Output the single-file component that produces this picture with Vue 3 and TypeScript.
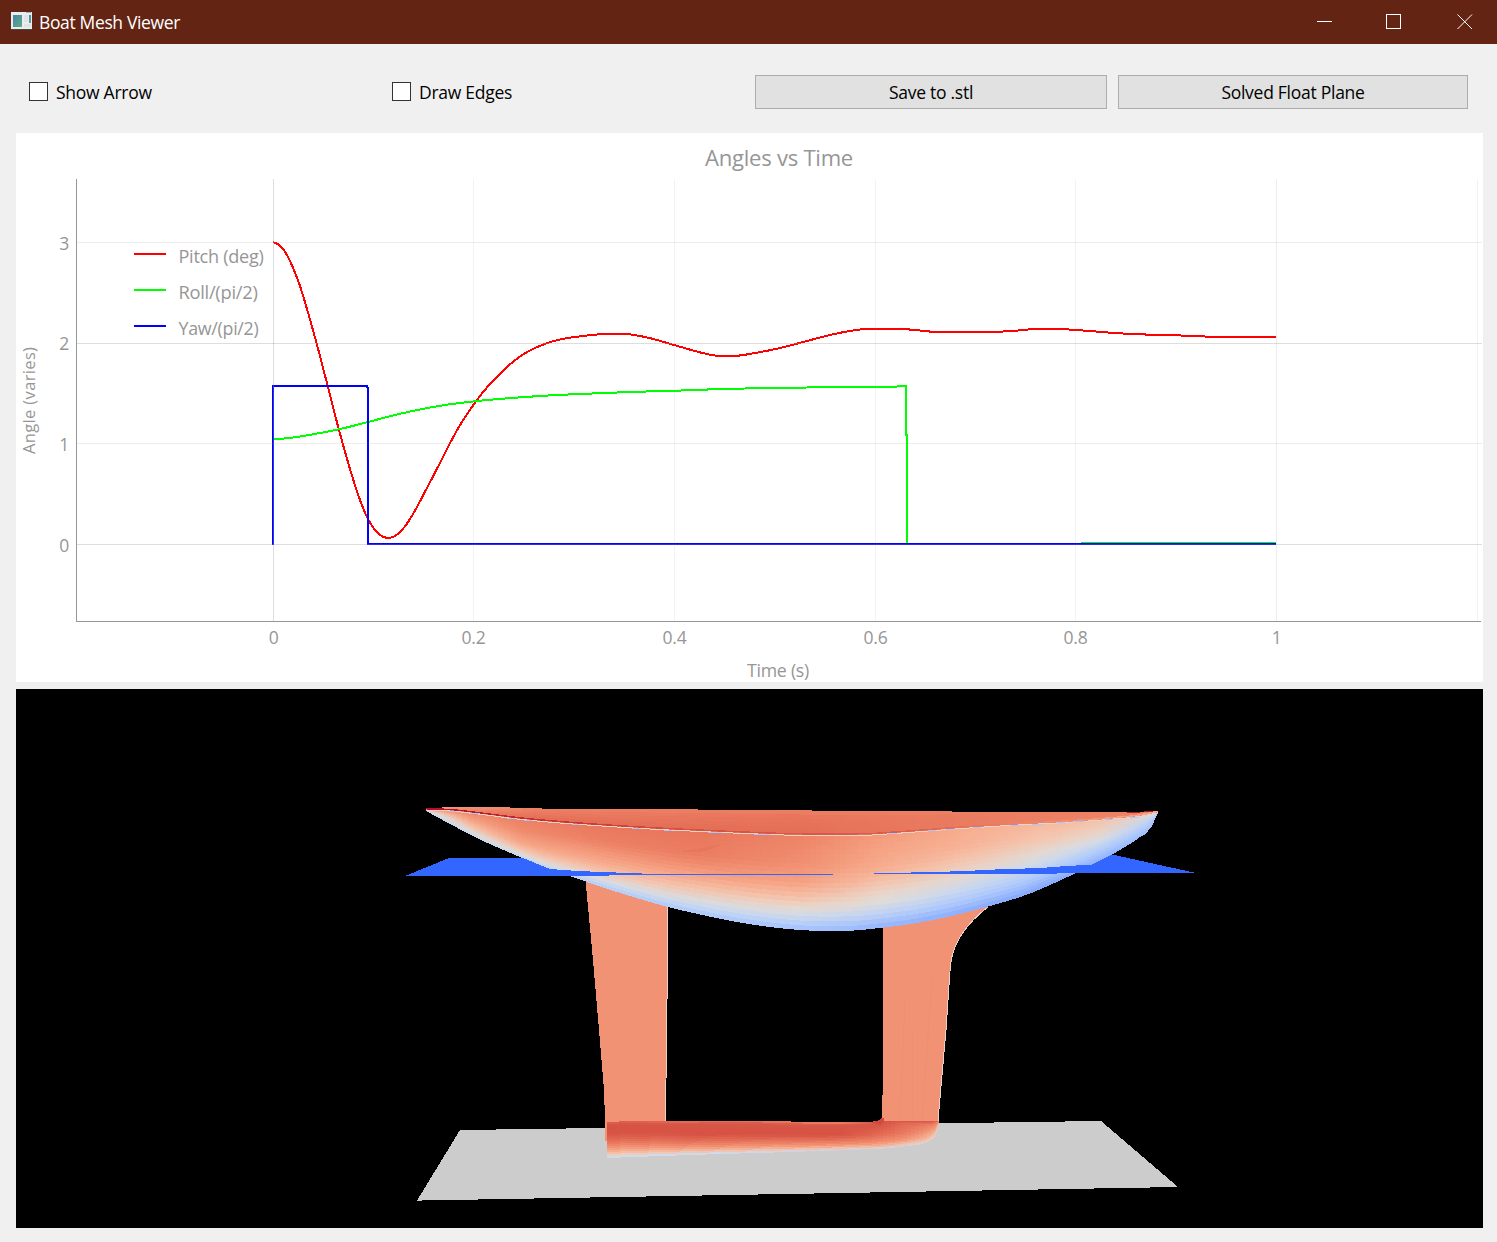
<script setup lang="ts">
import { ref } from 'vue'

type Point = [number, number]
type Stop = [number, string]
type Column = { x: number; stops: Stop[] }

const showArrow = ref(false)
const drawEdges = ref(false)

/** Cubic Hermite interpolation of y at x, flat at local extremes. */
function interpolate(points: Point[], x: number): number {
  const n = points.length
  if (x <= points[0][0]) return points[0][1]
  if (x >= points[n - 1][0]) return points[n - 1][1]
  let i = 0
  while (x > points[i + 1][0]) i++
  const span = (k: number) => points[k + 1][0] - points[k][0]
  const slope = (k: number) => (points[k + 1][1] - points[k][1]) / span(k)
  const tangent = (k: number) => {
    if (k === 0) return slope(0)
    if (k === n - 1) return slope(n - 2)
    const a = slope(k - 1)
    const b = slope(k)
    if (a * b <= 0) return 0
    const weighted = (a * span(k) + b * span(k - 1)) / (span(k) + span(k - 1))
    const limit = 3 * Math.min(Math.abs(a), Math.abs(b))
    return Math.sign(weighted) * Math.min(Math.abs(weighted), limit)
  }
  const h = span(i)
  const t = (x - points[i][0]) / h
  const t2 = t * t
  const t3 = t2 * t
  return (
    (2 * t3 - 3 * t2 + 1) * points[i][1] +
    (t3 - 2 * t2 + t) * h * tangent(i) +
    (-2 * t3 + 3 * t2) * points[i + 1][1] +
    (t3 - t2) * h * tangent(i + 1)
  )
}

function sampled(points: Point[], step = 2): string {
  const out: string[] = []
  const end = points[points.length - 1][0]
  for (let x = points[0][0]; x < end; x += step) {
    out.push(`${x.toFixed(1)},${interpolate(points, x).toFixed(2)}`)
  }
  out.push(`${end},${points[points.length - 1][1]}`)
  return out.join(' ')
}

/* ---------- chart ---------- */

const pitch = sampled([
  [273, 242.3], [278, 244.2], [284, 250.3], [291.7, 264.8], [300, 286], [307, 309], [316.5, 343],
  [327.7, 386], [339, 430], [350, 469], [360, 500], [368, 519], [372.5, 526.5], [379, 534],
  [388.5, 537.9], [398, 533.8], [405, 526.3], [413, 514], [425, 491.7], [438.3, 466.2],
  [451.7, 440], [461.7, 422.3], [473.5, 404.8], [483.3, 391.8], [496, 377.8], [510, 364.3],
  [526.7, 352.3], [546.7, 343.3], [565, 338.5], [580, 336.4], [600, 334.3],
  [615, 333.8], [628, 334.2], [645, 337], [674, 345], [695, 351], [706, 353.8], [720, 355.9],
  [735, 355.8], [755, 353], [780, 348], [805, 341.5], [830, 335], [850, 331], [868, 329],
  [900, 329], [920, 330.5], [936, 331.9], [985, 332], [1012, 331], [1037, 329], [1056, 329],
  [1080, 330.3], [1098, 331.7], [1115, 333], [1140, 334.3], [1175, 335.3], [1205, 336.5],
  [1230, 337], [1276, 337],
])

const roll =
  sampled([
    [273, 439], [285, 438.4], [300, 436.5], [320, 433], [340, 429], [368, 422], [395, 415],
    [420, 409.5], [445, 405], [473, 401.5], [495, 399.3], [520, 397.4], [550, 395.4],
    [590, 393.6], [640, 391.7], [675, 390.7], [720, 389.1], [780, 387.9], [850, 387], [895, 386.6],
    [905, 386],
  ]) + ' 906,386 906,435 907,435 907,544 1082,544 1082,543.4 1276,543.4'

const yaw = '273,545 273,386 367,386 368,389 368,544 1276,544'

const verticals = [
  { x: 273.5, label: '0', color: 'rgba(150,150,150,.32)' },
  { x: 473.5, label: '0.2', color: 'rgba(150,150,150,.11)' },
  { x: 674.5, label: '0.4', color: 'rgba(150,150,150,.11)' },
  { x: 875.5, label: '0.6', color: 'rgba(150,150,150,.11)' },
  { x: 1075.5, label: '0.8', color: 'rgba(150,150,150,.11)' },
  { x: 1276.5, label: '1', color: 'rgba(150,150,150,.17)' },
  { x: 1477.5, label: '', color: 'rgba(150,150,150,.11)' },
]
const horizontals = [
  { y: 242.5, base: 250, label: '3', color: 'rgba(150,150,150,.17)' },
  { y: 343.5, base: 350, label: '2', color: 'rgba(150,150,150,.32)' },
  { y: 443.5, base: 451, label: '1', color: 'rgba(150,150,150,.17)' },
  { y: 544.5, base: 552, label: '0', color: 'rgba(150,150,150,.32)' },
]
const legend = [
  { y: 254, label: 'Pitch (deg)', color: '#ff0000', width: 85 },
  { y: 290, label: 'Roll/(pi/2)', color: '#00ff00', width: 79 },
  { y: 326, label: 'Yaw/(pi/2)', color: '#0000ff', width: 80 },
]

/* ---------- boat mesh ---------- */

function rgb(hex: string): number[] {
  const n = parseInt(hex, 16)
  return [n >> 16, (n >> 8) & 255, n & 255]
}
function mix(a: number[], b: number[], t: number): number[] {
  return a.map((c, i) => c + (b[i] - c) * t)
}
function stopColor(stops: Stop[], v: number): number[] {
  for (let i = 1; i < stops.length; i++) {
    if (v <= stops[i][0]) {
      const t = (v - stops[i - 1][0]) / (stops[i][0] - stops[i - 1][0])
      return mix(rgb(stops[i - 1][1]), rgb(stops[i][1]), Math.max(0, t))
    }
  }
  return rgb(stops[stops.length - 1][1])
}
function shade(columns: Column[], x: number, v: number): string {
  let color = stopColor(columns[columns.length - 1].stops, v)
  if (x <= columns[0].x) color = stopColor(columns[0].stops, v)
  else {
    for (let i = 1; i < columns.length; i++) {
      if (x <= columns[i].x) {
        const t = (x - columns[i - 1].x) / (columns[i].x - columns[i - 1].x)
        color = mix(stopColor(columns[i - 1].stops, v), stopColor(columns[i].stops, v), t)
        break
      }
    }
  }
  return `rgb(${color.map((c) => Math.round(c)).join(',')})`
}

/** Splits the area between two curves into flat-shaded faces. */
function buildFaces(top: Point[], bottom: Point[], columns: Column[], cell: number, rows: number) {
  const faces: { points: string; color: string }[] = []
  const start = top[0][0]
  const end = top[top.length - 1][0]
  const count = Math.ceil((end - start) / cell)
  const at = (x: number, v: number) => {
    const a = interpolate(top, x)
    const b = interpolate(bottom, x)
    return `${x.toFixed(2)},${(a + (b - a) * v).toFixed(2)}`
  }
  for (let c = 0; c < count; c++) {
    const x0 = start + ((end - start) * c) / count
    const x1 = start + ((end - start) * (c + 1)) / count
    for (let r = 0; r < rows; r++) {
      const v0 = r / rows
      const v1 = (r + 1) / rows
      faces.push({
        points: `${at(x0, v0)} ${at(x1, v0)} ${at(x1, v1)} ${at(x0, v1)}`,
        color: shade(columns, (x0 + x1) / 2, (v0 + v1) / 2),
      })
    }
  }
  return faces
}

const backRim: Point[] = [
  [426, 809], [444, 807.3], [510, 807.5], [545, 808.6], [683, 809.4], [824, 810.6], [965, 811.6],
  [1106, 812.5], [1158, 812],
]
const frontRim: Point[] = [
  [426, 810], [450, 810.7], [480, 814], [520, 819], [560, 822.7], [600, 825.6], [650, 828.7],
  [700, 831.2], [760, 833.8], [800, 835], [860, 835], [900, 832.8], [940, 829.8], [1000, 825.7],
  [1060, 822.5], [1110, 819], [1140, 816], [1158, 812.5],
]
const keelLine: Point[] = [
  [426, 811], [450, 824], [480, 839.5], [520, 857], [550, 869.5], [570, 876], [600, 886.5],
  [640, 899], [668, 907], [700, 914.5], [740, 922.5], [770, 927], [800, 930], [825, 931],
  [850, 930.7], [880, 928], [920, 922.5], [960, 914], [990, 906], [1030, 893.5], [1060, 880.5],
  [1080, 871], [1112, 854.5], [1140, 837], [1151, 828], [1155, 819], [1158, 812.5],
]

const deckFaces = buildFaces(
  backRim,
  frontRim,
  [
    { x: 426, stops: [[0, 'f4a384'], [1, 'e9785d']] },
    { x: 540, stops: [[0, 'ec8165'], [0.4, 'e9795e'], [1, 'e26952']] },
    { x: 800, stops: [[0, 'ec8064'], [0.3, 'e7745b'], [1, 'e46e56']] },
    { x: 1158, stops: [[0, 'ec8165'], [1, 'f08a6c']] },
  ],
  12,
  6,
)

const hullFaces = buildFaces(
  frontRim,
  keelLine,
  [
    { x: 440, stops: [[0, 'f39475'], [0.3, 'f5c1a9'], [0.6, 'dddcdb'], [1, 'c5d6f2']] },
    { x: 470, stops: [[0, 'ef886b'], [0.3, 'f6a283'], [0.6, 'f5c1a9'], [0.85, 'dddcdb'], [1, 'c9d7f0']] },
    { x: 520, stops: [[0, 'ec8064'], [0.3, 'f08b6e'], [0.6, 'f6a586'], [0.8, 'f4c5ae'], [0.92, 'dddcdb'], [1, 'c5d6f2']] },
    { x: 600, stops: [[0, 'e9785d'], [0.25, 'ec8064'], [0.45, 'f4987a'], [0.6, 'f7aa8c'], [0.76, 'f3c7b1'], [0.88, 'd9dce1'], [1, 'b2ccfb']] },
    { x: 700, stops: [[0, 'e8765c'], [0.28, 'eb7d62'], [0.42, 'f18f71'], [0.55, 'f7a688'], [0.7, 'f3c5ae'], [0.84, 'dadce0'], [0.93, 'c0d4f5'], [1, 'aac7fd']] },
    { x: 800, stops: [[0, 'ed8366'], [0.3, 'f18f71'], [0.5, 'f6a283'], [0.65, 'f5bfa6'], [0.73, 'edd1c2'], [0.8, 'dddcdb'], [0.9, 'c0d4f5'], [1, 'a1c0ff']] },
    { x: 880, stops: [[0, 'f49a7b'], [0.35, 'f7ac8e'], [0.5, 'f5c1a9'], [0.63, 'ead5c9'], [0.73, 'dddcdb'], [0.85, 'bed2f6'], [1, '92b4fe']] },
    { x: 960, stops: [[0, 'f7ac8e'], [0.2, 'f7b194'], [0.4, 'f3c7b1'], [0.58, 'e3d9d3'], [0.72, 'c9d7f0'], [0.86, 'aec9fc'], [1, '88abfd']] },
    { x: 1040, stops: [[0, 'f7b89c'], [0.25, 'f3c7b1'], [0.45, 'e3d9d3'], [0.6, 'cedaeb'], [0.8, 'adc9fd'], [1, '82a6fb']] },
    { x: 1100, stops: [[0, 'f5c1a9'], [0.3, 'ead3c6'], [0.5, 'd5dbe5'], [0.75, 'b0cbfc'], [1, '8fb1fe']] },
    { x: 1150, stops: [[0, 'dddcdb'], [0.4, 'bed2f6'], [1, 'a1c0ff']] },
  ],
  6,
  20,
)

const bulbFaces = buildFaces(
  [[607, 1122], [650, 1120.6], [751, 1120.6], [810, 1122], [868, 1122.3], [880, 1120.5], [939, 1120.5]],
  [
    [607, 1158], [700, 1154.7], [780, 1152.3], [848, 1150], [895, 1147.5], [915, 1145],
    [925, 1143], [932, 1139], [937, 1132], [939, 1124],
  ],
  [
    { x: 607, stops: [[0, 'dd5f4b'], [0.1, 'd65244'], [0.32, 'd75445'], [0.5, 'e36b54'], [0.65, 'ef886b'], [0.8, 'f7ac8e'], [0.9, 'f1cdba'], [0.97, 'd5dbe5'], [1, 'b5cdfa']] },
    { x: 700, stops: [[0, 'e7745b'], [0.1, 'd85646'], [0.4, 'd65244'], [0.6, 'e46e56'], [0.75, 'f18f71'], [0.88, 'f7b89c'], [0.97, 'd5dbe5'], [1, 'b5cdfa']] },
    { x: 840, stops: [[0, 'f08a6c'], [0.1, 'd85646'], [0.45, 'd65244'], [0.65, 'e7745b'], [0.8, 'f39475'], [0.92, 'f5c1a9'], [1, 'c5d6f2']] },
    { x: 880, stops: [[0, 'd65244'], [0.2, 'd95847'], [0.5, 'e36b54'], [0.75, 'f08b6e'], [0.9, 'f7b194'], [1, 'd5dbe5']] },
    { x: 905, stops: [[0, 'd65244'], [0.12, 'e26952'], [0.5, 'ea7b60'], [0.75, 'f4987a'], [0.9, 'f5bfa6'], [1, 'c9d7f0']] },
    { x: 935, stops: [[0, 'd65244'], [0.2, 'ec8064'], [0.6, 'f7a889'], [1, 'ead3c6']] },
  ],
  4,
  18,
)

const rimLine = sampled(frontRim, 4)
const rimDashes: [number, number][] = [
  [449, 456], [470, 482], [507, 515], [524, 532], [572, 579], [632, 641], [664, 672], [708, 722],
  [754, 770], [888, 897], [928, 936], [946, 954], [973, 981], [1010, 1020], [1032, 1044],
  [1056, 1065], [1074, 1084], [1105, 1112], [1130, 1138],
]
const rimBlue = rimDashes
  .map(([a, b]) => {
    const y = interpolate(frontRim, (a + b) / 2) + 0.4
    return `M${a} ${y.toFixed(2)}H${b}`
  })
  .join('')
</script>

<template>
  <div class="window">
    <header class="titlebar">
      <svg class="app-icon" width="22" height="20" viewBox="0 0 22 20">
        <defs>
          <linearGradient id="pane" x1="0" y1="0" x2="1" y2="1">
            <stop offset="0" stop-color="#4a83a8" />
            <stop offset="1" stop-color="#5cae84" />
          </linearGradient>
        </defs>
        <rect x="0" y="1" width="21" height="18" fill="#4a4643" />
        <rect x="0" y="1" width="21" height="17" fill="#e9edf0" />
        <rect x="15" y="1" width="5" height="1" fill="#9fb0b8" />
        <rect x="2" y="4" width="9" height="12" fill="url(#pane)" />
        <rect x="13" y="4" width="4" height="7" fill="#dfe3e6" />
        <rect x="18" y="4" width="2" height="8" fill="url(#pane)" />
        <rect x="13" y="13" width="7" height="3" fill="#dfe3e6" />
      </svg>
      <span class="title">Boat Mesh Viewer</span>
      <div class="controls">
        <svg width="16" height="16" viewBox="0 0 16 16"><path d="M0 7.5H15" /></svg>
        <svg width="16" height="16" viewBox="0 0 16 16"><path d="M.5 .5H14.5V14.5H.5Z" /></svg>
        <svg class="close" width="16" height="16" viewBox="0 0 16 16"><path d="M.5 .5L15 15M15 .5L.5 15" /></svg>
      </div>
    </header>

    <section class="toolbar">
      <label class="check"><input v-model="showArrow" type="checkbox" /><span>Show Arrow</span></label>
      <label class="check"><input v-model="drawEdges" type="checkbox" /><span>Draw Edges</span></label>
      <button>Save to .stl</button>
      <button>Solved Float Plane</button>
    </section>

    <svg class="chart" width="1467" height="549" viewBox="16 133 1467 549">
      <g class="curves">
        <polyline :points="pitch" stroke="#ff0000" />
        <polyline :points="roll" stroke="#00ff00" />
        <polyline :points="yaw" stroke="#0000ff" />
      </g>
      <g class="grid">
        <line v-for="v in verticals" :key="v.x" :x1="v.x" :x2="v.x" y1="179" y2="621" :stroke="v.color" />
        <line v-for="h in horizontals" :key="h.y" x1="77" x2="1482" :y1="h.y" :y2="h.y" :stroke="h.color" />
        <path d="M76.5 179V621.5H1481" stroke="#969696" fill="none" />
      </g>
      <text class="heading" x="705" y="166" textLength="148" lengthAdjust="spacingAndGlyphs">Angles vs Time</text>
      <text v-for="v in verticals" :key="'t' + v.x" :x="v.x" y="644" text-anchor="middle">{{ v.label }}</text>
      <text v-for="h in horizontals" :key="'t' + h.y" x="69" :y="h.base" text-anchor="end">{{ h.label }}</text>
      <text x="747" y="677" textLength="62" lengthAdjust="spacingAndGlyphs">Time (s)</text>
      <text class="axis-title" transform="translate(34.5 454) rotate(-90)" textLength="107">Angle (varies)</text>
      <g v-for="item in legend" :key="item.label">
        <line x1="134" x2="166" :y1="item.y" :y2="item.y" :stroke="item.color" stroke-width="2" />
        <text x="178.500" :y="item.y + 9" :textLength="item.width" lengthAdjust="spacingAndGlyphs">{{ item.label }}</text>
      </g>
    </svg>

    <svg class="scene" width="1467" height="539" viewBox="16 689 1467 539" shape-rendering="crispEdges">
      <rect x="16" y="689" width="1467" height="539" fill="#000" />
      <polygon points="460,1130 1101,1121 1178,1187 417,1200.6" fill="#cccccc" />
      <!-- keel struts -->
      <path d="M585 875L593 960L599 1030L604 1090L605 1120V1141H608V1124H665L666 1060L667.5 905V890Z" fill="#f29274" />
      <path d="M667.5 905V960L666.5 1040L665.5 1121" stroke="#ead3c6" fill="none" />
      <path d="M883 920V1070L882 1121H938L942 1075L946 1030L949 985L950.5 965Q954 933 990 905Z" fill="#f29274" />
      <path d="M900 1120L905 1000M912 1120L913 1030M922 1120L932 980" stroke="#ef8e70" fill="none" />
      <path d="M938 1121L942 1075L946 1030L949 985L950.500 965Q954 933 988 907" stroke="#e3d3cb" fill="none" />
      <!-- ballast bulb -->
      <polygon v-for="(f, i) in bulbFaces" :key="'b' + i" :points="f.points" :fill="f.color" />
      <path d="M872 1122.500L880 1120L881 1118L884 1117.500V1122L880 1125Z" fill="#d14a40" />
      <!-- hull -->
      <polygon v-for="(f, i) in deckFaces" :key="'d' + i" :points="f.points" :fill="f.color" />
      <polygon v-for="(f, i) in hullFaces" :key="'h' + i" :points="f.points" :fill="f.color" />
      <path d="M680 852L724 844L702 852Z" fill="#e8765c" />
      <g fill="none">
        <polyline :points="rimLine" stroke="#ead3c6" transform="translate(0 .3)" />
        <path :d="rimBlue" stroke="#a7c5fe" />
        <polyline :points="rimLine" stroke="url(#rim)" stroke-width="1.4" transform="translate(0 -1.2)" />
        <path d="M1127 812.500H1140M1144 811.500H1153" stroke="#b5182b" />
      </g>
      <defs>
        <linearGradient id="rim" gradientUnits="userSpaceOnUse" x1="426" y1="0" x2="1158" y2="0">
          <stop offset="0" stop-color="#b50b27" />
          <stop offset=".15" stop-color="#c43032" />
          <stop offset=".35" stop-color="#d55042" />
          <stop offset=".65" stop-color="#dc5d4a" />
          <stop offset=".85" stop-color="#f08a6c" />
          <stop offset="1" stop-color="#f7ac8e" />
        </linearGradient>
      </defs>
      <!-- float plane -->
      <path
        d="M405 876L449 858H523L550 869L578 871L602 872L642 873.400V874H833V875H609V876Z
           M874 873L926 872.300L965 871L995 869.500L1040 868L1060 866.500L1092 864.500L1112 854.500L1196 873H1057V874H874Z"
        fill="#3366ff"
      />
    </svg>
  </div>
</template>

<style>
body {
  background: #f0f0f0;
}
</style>

<style scoped>
.window {
  display: flex;
  flex-direction: column;
  width: 1497px;
  height: 1242px;
  overflow: hidden;
  background: #f0f0f0;
  color: #000;
  font-family: 'Open Sans', 'Noto Sans', sans-serif;
  font-size: 17.5px;
  letter-spacing: -0.27px;
}
.titlebar {
  display: flex;
  align-items: center;
  height: 44px;
  padding: 0 24px 0 11px;
  background: #632413;
  color: #fff;
}
.app-icon {
  display: block;
  margin: 0 6px 3px 0;
}
.title {
  letter-spacing: -0.36px;
}
.controls {
  display: flex;
  gap: 53px;
  margin: 0 0 0 auto;
}
.controls path {
  fill: none;
  stroke: #fff;
  shape-rendering: crispEdges;
}
.controls .close {
  margin-left: 2px;
}
.controls .close path {
  shape-rendering: auto;
}
.controls svg:first-child {
  margin-left: -1px;
}
.toolbar {
  display: grid;
  grid-template-columns: 352px 352px 352px 350px;
  column-gap: 11px;
  align-items: center;
  height: 34px;
  margin: 31px 29px 24px;
}
.check {
  display: flex;
  align-items: center;
  gap: 8px;
}
.check input {
  appearance: none;
  box-sizing: border-box;
  width: 19px;
  height: 19px;
  margin: 0 0 1px;
  border: 1px solid #333;
  background: #fff;
}
button {
  height: 34px;
  padding: 0;
  border: 1px solid #adadad;
  background: #e1e1e1;
  color: #000;
  font: inherit;
  letter-spacing: inherit;
}
.chart {
  display: block;
  flex: none;
  margin: 0 0 7px 16px;
  background: #fff;
}
.chart text {
  fill: #969696;
  font-size: 17.5px;
}
.chart .axis-title {
  font-size: 16.5px;
  letter-spacing: 0;
}
.chart .heading {
  font-size: 22px;
}
.curves {
  fill: none;
  stroke-width: 2;
  shape-rendering: crispEdges;
}
.grid,
.chart g line {
  shape-rendering: crispEdges;
}
.scene {
  display: block;
  flex: none;
  margin-left: 16px;
}
</style>
